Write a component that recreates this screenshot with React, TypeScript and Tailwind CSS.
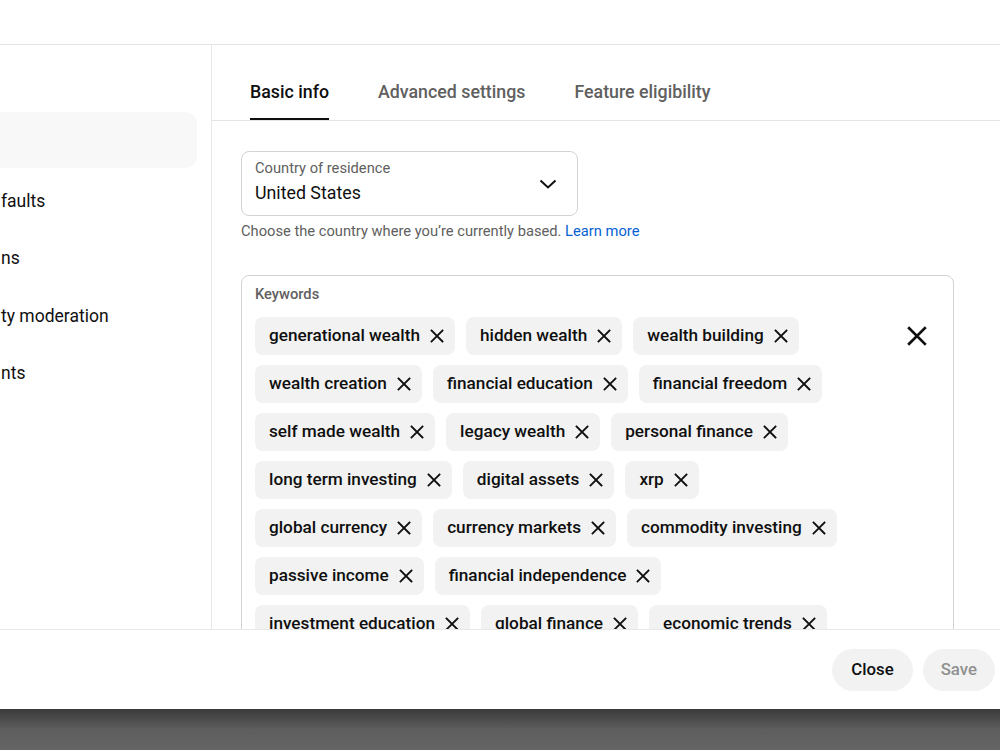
import React from "react";

const keywords = [
  "generational wealth",
  "hidden wealth",
  "wealth building",
  "wealth creation",
  "financial education",
  "financial freedom",
  "self made wealth",
  "legacy wealth",
  "personal finance",
  "long term investing",
  "digital assets",
  "xrp",
  "global currency",
  "currency markets",
  "commodity investing",
  "passive income",
  "financial independence",
  "investment education",
  "global finance",
  "economic trends",
  "wealth mindset",
  "money management",
];

function XIcon({ size = 14, stroke = 1.8 }: { size?: number; stroke?: number }) {
  return (
    <svg width={size} height={size} viewBox="0 0 14 14" fill="none" stroke="#0f0f0f" strokeWidth={stroke} strokeLinecap="square">
      <path d="M1.5 1.5L12.5 12.5M12.5 1.5L1.5 12.5" />
    </svg>
  );
}

function Chip({ label }: { label: string }) {
  return (
    <div className="flex h-[38px] items-center gap-[10px] rounded-lg bg-[#f2f2f2] pl-[14px] pr-[11px]">
      <span className="whitespace-nowrap text-[17.2px] font-medium leading-none text-[#0f0f0f]">{label}</span>
      <XIcon size={14} />
    </div>
  );
}

export default function App() {
  const side = [
    { t: "", sel: true },
    { t: "faults", sel: false },
    { t: "ns", sel: false },
    { t: "ty moderation", sel: false },
    { t: "nts", sel: false },
  ];
  return (
    <div className="flex h-[750px] w-[1000px] flex-col overflow-hidden bg-white" style={{ fontFamily: "Roboto, 'Noto Sans', sans-serif" }}>
      <div className="h-[45px] shrink-0 border-b border-[#e5e5e5] bg-white" />
      <div className="flex h-[584px] shrink-0 overflow-hidden">
        {/* sidebar */}
        <div className="w-[212px] shrink-0 border-r border-[#e8e8e8] pt-[67px]">
          <div className="flex flex-col">
            {side.map((s, i) => (
              <div
                key={i}
                className={
                  "flex w-[197px] items-center rounded-r-xl text-[17.5px] text-[#0f0f0f] " +
                  (s.sel ? "h-[56px] bg-[#f8f8f8] mb-[8px]" : "h-[50px] mb-[7.5px]")
                }
              >
                <span className="whitespace-nowrap pl-[1px]">{s.t}</span>
              </div>
            ))}
          </div>
        </div>
        {/* content */}
        <div className="flex flex-1 flex-col">
          <div className="flex h-[76px] shrink-0 gap-[49px] border-b border-[#e5e5e5] pl-[38px] pt-[19px]">
            <div className="relative flex items-center">
              <span className="text-[17.8px] font-medium text-[#0f0f0f]">Basic info</span>
              <div className="absolute bottom-[0px] left-0 right-0 h-[2px] bg-[#0f0f0f]" />
            </div>
            <div className="flex items-center">
              <span className="text-[17.8px] font-medium text-[#606060]">Advanced settings</span>
            </div>
            <div className="flex items-center">
              <span className="text-[17.8px] font-medium text-[#606060]">Feature eligibility</span>
            </div>
          </div>
          <div className="pl-[29px] pt-[30px]">
            <div className="flex h-[65px] w-[337px] items-center justify-between rounded-lg border border-[#d3d3d3] pl-[13px] pr-[20px]">
              <div className="-mt-[5px] flex flex-col">
                <span className="text-[14.7px] leading-[18px] text-[#606060]">Country of residence</span>
                <span className="mt-[6px] text-[17.8px] leading-[20px] text-[#0f0f0f]">United States</span>
              </div>
              <svg width="18" height="10" viewBox="0 0 18 10" fill="none" stroke="#0f0f0f" strokeWidth="2">
                <path d="M1.5 1.5L9 8.5L16.5 1.5" />
              </svg>
            </div>
            <p className="mt-[7px] text-[14.7px] leading-[16px] text-[#606060]">
              Choose the country where you’re currently based. <span className="text-[#065fd4]">Learn more</span>
            </p>
            <div className="mt-[36px] w-[713px] rounded-lg border border-[#d3d3d3] pb-[20px] pl-[13px] pr-[26px] pt-[10px]">
              <div className="text-[14.7px] font-medium leading-[16px] text-[#606060]">Keywords</div>
              <div className="mt-[15px] flex items-start">
                <div className="flex w-[610px] flex-wrap gap-x-[11px] gap-y-[10px]">
                  {keywords.map((k) => (
                    <Chip key={k} label={k} />
                  ))}
                </div>
                <div className="ml-auto flex h-[38px] items-center">
                  <XIcon size={20} stroke={1.9} />
                </div>
              </div>
            </div>
          </div>
        </div>
      </div>
      <div className="flex h-[80px] shrink-0 items-center justify-end gap-[10px] border-t border-[#e8e8e8] bg-white pr-[5px]">
        <button className="h-[42px] rounded-full bg-[#f2f2f2] px-[19px] text-[16.8px] font-medium text-[#0f0f0f]">Close</button>
        <button className="h-[42px] rounded-full bg-[#f2f2f2] px-[18px] text-[16.8px] font-medium text-[#909090]">Save</button>
      </div>
      <div className="flex-1 bg-gradient-to-b from-[#3a3a3a] via-[#5e5e5e] to-[#656565]" />
    </div>
  );
}
